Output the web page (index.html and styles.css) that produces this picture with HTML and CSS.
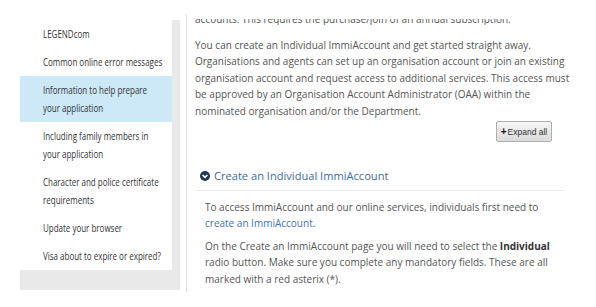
FILE: index.html
```html
<!DOCTYPE html>
<html lang="en">
<head>
    <meta charset="UTF-8">
    <meta name="viewport" content="width=device-width, initial-scale=1.0">
    <title>ImmiAccount</title>
    <link rel="stylesheet" href="styles.css">
</head>
<body>
    <div class="page">
        <div class="sidebar">
            <ul class="nav">
                <li><a href="#"><span>LEGENDcom</span></a></li>
                <li><a href="#"><span>Common online error messages</span></a></li>
                <li class="active"><a href="#"><span>Information to help prepare<br>your application</span></a></li>
                <li><a href="#"><span>Including family members in<br>your application</span></a></li>
                <li><a href="#"><span>Character and police certificate<br>requirements</span></a></li>
                <li><a href="#"><span>Update your browser</span></a></li>
                <li><a href="#"><span>Visa about to expire or expired?</span></a></li>
            </ul>
        </div>

        <div class="main">
            <div class="content">
                <div class="cut">
                    <p>accounts. This requires the purchase/join of an annual subscription.</p>
                </div>
                <p>You can create an Individual ImmiAccount and get started straight away.<br>Organisations and agents can set up an organisation account or join an existing<br>organisation account and request access to additional services. This access must<br>be approved by an Organisation Account Administrator (OAA) within the<br>nominated organisation and/or the Department.</p>

                <div class="actions">
                    <button class="expand"><b>+</b>Expand all</button>
                </div>

                <div class="acc">
                    <div class="acc-head">
                        <svg class="acc-icon" width="10" height="10" viewBox="0 0 10 10">
                            <circle cx="5" cy="5" r="5" fill="#1f3759"/>
                            <path d="M2.6 4 L5 6.4 L7.4 4" fill="none" stroke="#fff" stroke-width="1.6"/>
                        </svg>
                        <span>Create an Individual ImmiAccount</span>
                    </div>
                    <div class="acc-body">
                        <p>To access ImmiAccount and our online services, individuals first need to<br><a href="#">create an ImmiAccount</a>.</p>
                        <p>On the Create an ImmiAccount page you will need to select the <b>Individual</b><br>radio button. Make sure you complete any mandatory fields. These are all<br>marked with a red asterix (*).</p>
                    </div>
                </div>
            </div>
        </div>
    </div>
</body>
</html>
```

FILE: styles.css
```css
body {
    margin: 0;
    background: #fff;
    font-family: "Open Sans", Arial, sans-serif;
    color: #555;
}

.page {
    display: flex;
    align-items: flex-start;
    padding-left: 20px;
}

/* left menu */
.sidebar {
    width: 160px;
    box-sizing: border-box;
    margin-top: 20px;
    padding: 0 8px 20px 0;
    background-color: #e9e9e9;
}

.nav {
    list-style: none;
    margin: 0;
    padding: 0;
    background-color: #fff;
    overflow: hidden;
}

.nav li {
    padding: 5px 0 5px 23px;
    font-size: 11.5px;
    line-height: 18px;
    white-space: nowrap;
}

.nav a {
    color: #333;
    text-decoration: none;
}

.nav span {
    display: inline-block;
    transform: scaleX(0.694);
    transform-origin: 0 0;
}

.nav li.active {
    background-color: #cde8f7;
}

/* right column */
.main {
    margin-left: 6px;
    margin-top: 14px;
    height: 278px;
    overflow: hidden;
    border-left: 1px solid #e2e2e2;
    padding-left: 8px;
    width: 380px;
}

.content {
    padding-top: 4.5px;
    font-size: 10px;
    line-height: 16.5px;
    white-space: nowrap;
}

.content p {
    margin: 0;
}

.cut {
    height: 6px;
    overflow: hidden;
    margin-bottom: 12.25px;
}

.cut p {
    margin-top: -7.75px;
}

.actions {
    text-align: right;
    margin-top: 1.75px;
    padding-right: 23px;
}

.expand {
    height: 21px;
    width: 56px;
    padding: 0 2px;
    border: 1px solid #aeaeae;
    border-radius: 2px;
    background: linear-gradient(#f7f7f7, #dadada);
    font-family: "Liberation Sans", Arial, sans-serif;
    font-size: 8.5px;
    color: #333;
}

.expand b {
    color: #111;
    font-size: 10px;
    margin-right: 1px;
}

.acc {
    margin-top: 19px;
    margin-right: 10px;
}

.acc-head {
    display: flex;
    align-items: center;
    gap: 4px;
    padding: 6px 0 5px 5px;
    border-bottom: 1px solid #efefef;
    font-size: 11.1px;
    line-height: 18px;
    color: #3c6a9f;
}

.acc-body {
    padding: 7.75px 0 0 10px;
}

.acc-body p + p {
    margin-top: 6px;
}

.acc-body a {
    color: #3f72b5;
    text-decoration: none;
}

.acc-body b {
    color: #333;
}
```
